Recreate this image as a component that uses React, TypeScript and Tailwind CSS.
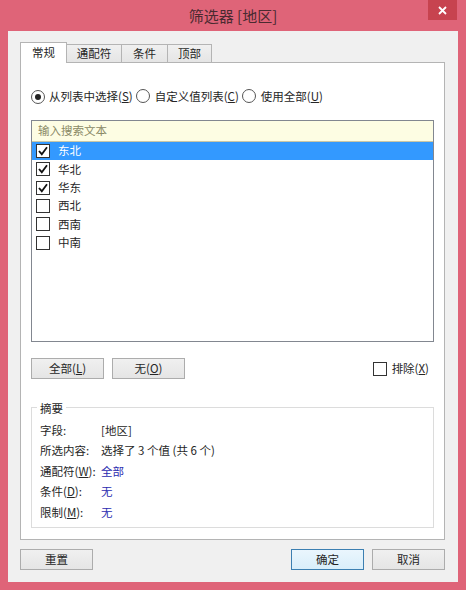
import React from "react";

const FONT = { fontFamily: '"Noto Sans CJK SC", "Microsoft YaHei", sans-serif' };

/** Win8 style checkbox */
function CheckBox({ checked }: { checked?: boolean }) {
  return (
    <span className="inline-flex h-[14px] w-[14px] shrink-0 items-center justify-center border border-[#333333] bg-white">
      {checked && (
        <svg width="12" height="12" viewBox="0 0 12 12">
          <path d="M2 6 L4.8 9.2 L10 2.2" fill="none" stroke="#111" strokeWidth="1.8" />
        </svg>
      )}
    </span>
  );
}

function Radio({ checked }: { checked?: boolean }) {
  return (
    <span className="inline-flex h-[14px] w-[14px] shrink-0 items-center justify-center rounded-full border border-[#555555] bg-white">
      {checked && <span className="h-[6px] w-[6px] rounded-full bg-[#222222]" />}
    </span>
  );
}

function Button({ children, primary }: { children: React.ReactNode; primary?: boolean }) {
  return (
    <div
      className={
        "flex h-[21px] w-[73px] items-center justify-center border text-[11.5px] leading-none text-[#262626] " +
        (primary
          ? "border-[#3c7fb1] bg-gradient-to-b from-[#eaf6fd] to-[#d9eefa]"
          : "border-[#acacac] bg-gradient-to-b from-[#f0f0f0] to-[#e5e5e5]")
      }
    >
      {children}
    </div>
  );
}

const items = [
  { name: "东北", checked: true },
  { name: "华北", checked: true },
  { name: "华东", checked: true },
  { name: "西北", checked: false },
  { name: "西南", checked: false },
  { name: "中南", checked: false },
];

const summary: { label: React.ReactNode; value: string; blue?: boolean }[] = [
  { label: "字段:", value: "[地区]" },
  { label: "所选内容:", value: "选择了 3 个值 (共 6 个)" },
  { label: <>通配符(<u>W</u>):</>, value: "全部", blue: true },
  { label: <>条件(<u>D</u>):</>, value: "无", blue: true },
  { label: <>限制(<u>M</u>):</>, value: "无", blue: true },
];

export default function App() {
  return (
    <div className="flex h-[590px] w-[466px] flex-col bg-[#df6478] text-[#262626]" style={FONT}>
      {/* Title bar */}
      <div className="relative flex h-[31px] shrink-0 items-center justify-center">
        <span className="text-[15px] leading-none text-[#4a2a30]">筛选器 [地区]</span>
        <div className="absolute right-[9px] top-0 flex h-[20px] w-[29px] items-center justify-center bg-[#c7434f]">
          <svg width="9" height="9" viewBox="0 0 9 9">
            <path d="M1 1 L8 8 M8 1 L1 8" stroke="#fff" strokeWidth="1.8" />
          </svg>
        </div>
      </div>

      {/* Client area */}
      <div className="mx-[8px] mb-[8px] flex flex-1 flex-col bg-[#f0f0f0] px-[12px] pt-[11px]">
        {/* Tabs */}
        <div className="flex h-[20px] items-end">
          <div className="relative z-10 -mb-px flex h-[21px] w-[47px] items-center justify-center border border-b-0 border-[#b4b4b4] bg-white text-[11.5px] leading-none">
            常规
          </div>
          <div className="-ml-px flex h-[18px] w-[56px] items-center justify-center border border-b-0 border-[#b4b4b4] bg-gradient-to-b from-[#f0f0f0] to-[#e5e5e5] text-[11.5px] leading-none">
            通配符
          </div>
          <div className="-ml-px flex h-[18px] w-[47px] items-center justify-center border border-b-0 border-[#b4b4b4] bg-gradient-to-b from-[#f0f0f0] to-[#e5e5e5] text-[11.5px] leading-none">
            条件
          </div>
          <div className="-ml-px flex h-[18px] w-[45px] items-center justify-center border border-b-0 border-[#b4b4b4] bg-gradient-to-b from-[#f0f0f0] to-[#e5e5e5] text-[11.5px] leading-none">
            顶部
          </div>
        </div>

        {/* Panel */}
        <div className="flex h-[478px] w-[425px] flex-col border border-[#b4b4b4] bg-white px-[10px] pt-[26px]">
          <div className="flex h-[16px] items-center text-[11.5px] leading-none">
            <Radio checked />
            <span className="ml-[4px]">从列表中选择(<u>S</u>)</span>
            <span className="ml-[3px]"><Radio /></span>
            <span className="ml-[5px]">自定义值列表(<u>C</u>)</span>
            <span className="ml-[3px]"><Radio /></span>
            <span className="ml-[5px]">使用全部(<u>U</u>)</span>
          </div>

          {/* List box */}
          <div className="mt-[15px] flex h-[222px] flex-col border border-[#828790] bg-white">
            <div className="flex h-[21px] items-center border-b border-[#c9c6a6] bg-[#fdfde3] pl-[6px] text-[11.5px] leading-none text-[#8a8a66]">
              输入搜索文本
            </div>
            {items.map((it, i) => (
              <div
                key={it.name}
                className={
                  "flex h-[18.3px] items-center pl-[4px] text-[11.5px] leading-none " +
                  (i === 0 ? "bg-[#3399ff] text-white" : "")
                }
              >
                <CheckBox checked={it.checked} />
                <span className="ml-[8px]">{it.name}</span>
              </div>
            ))}
          </div>

          {/* Buttons row */}
          <div className="mt-[16px] flex h-[21px] items-center">
            <Button>全部(<u>L</u>)</Button>
            <div className="ml-[8px]">
              <Button>无(<u>O</u>)</Button>
            </div>
            <div className="ml-auto mr-[5px] flex items-center text-[11.5px] leading-none">
              <CheckBox />
              <span className="ml-[5px]">排除(<u>X</u>)</span>
            </div>
          </div>

          {/* Summary group */}
          <div className="relative mt-[28px] h-[121px] border border-[#dcdcdc] pl-[8px] pt-[12px]">
            <span className="absolute -top-[8px] left-[5px] bg-white px-[3px] text-[11.5px] leading-[16px]">
              摘要
            </span>
            {summary.map((s, i) => (
              <div key={i} className="flex h-[20.5px] items-center text-[11.5px] leading-none">
                <span className="w-[61px] shrink-0">{s.label}</span>
                <span className={s.blue ? "text-[#2b2bb0]" : ""}>{s.value}</span>
              </div>
            ))}
          </div>
        </div>

        {/* Dialog buttons */}
        <div className="mt-[9px] flex h-[21px] items-center">
          <Button>重置</Button>
          <div className="ml-auto flex gap-[8px] pr-[1px]">
            <Button primary>确定</Button>
            <Button>取消</Button>
          </div>
        </div>
      </div>
    </div>
  );
}
